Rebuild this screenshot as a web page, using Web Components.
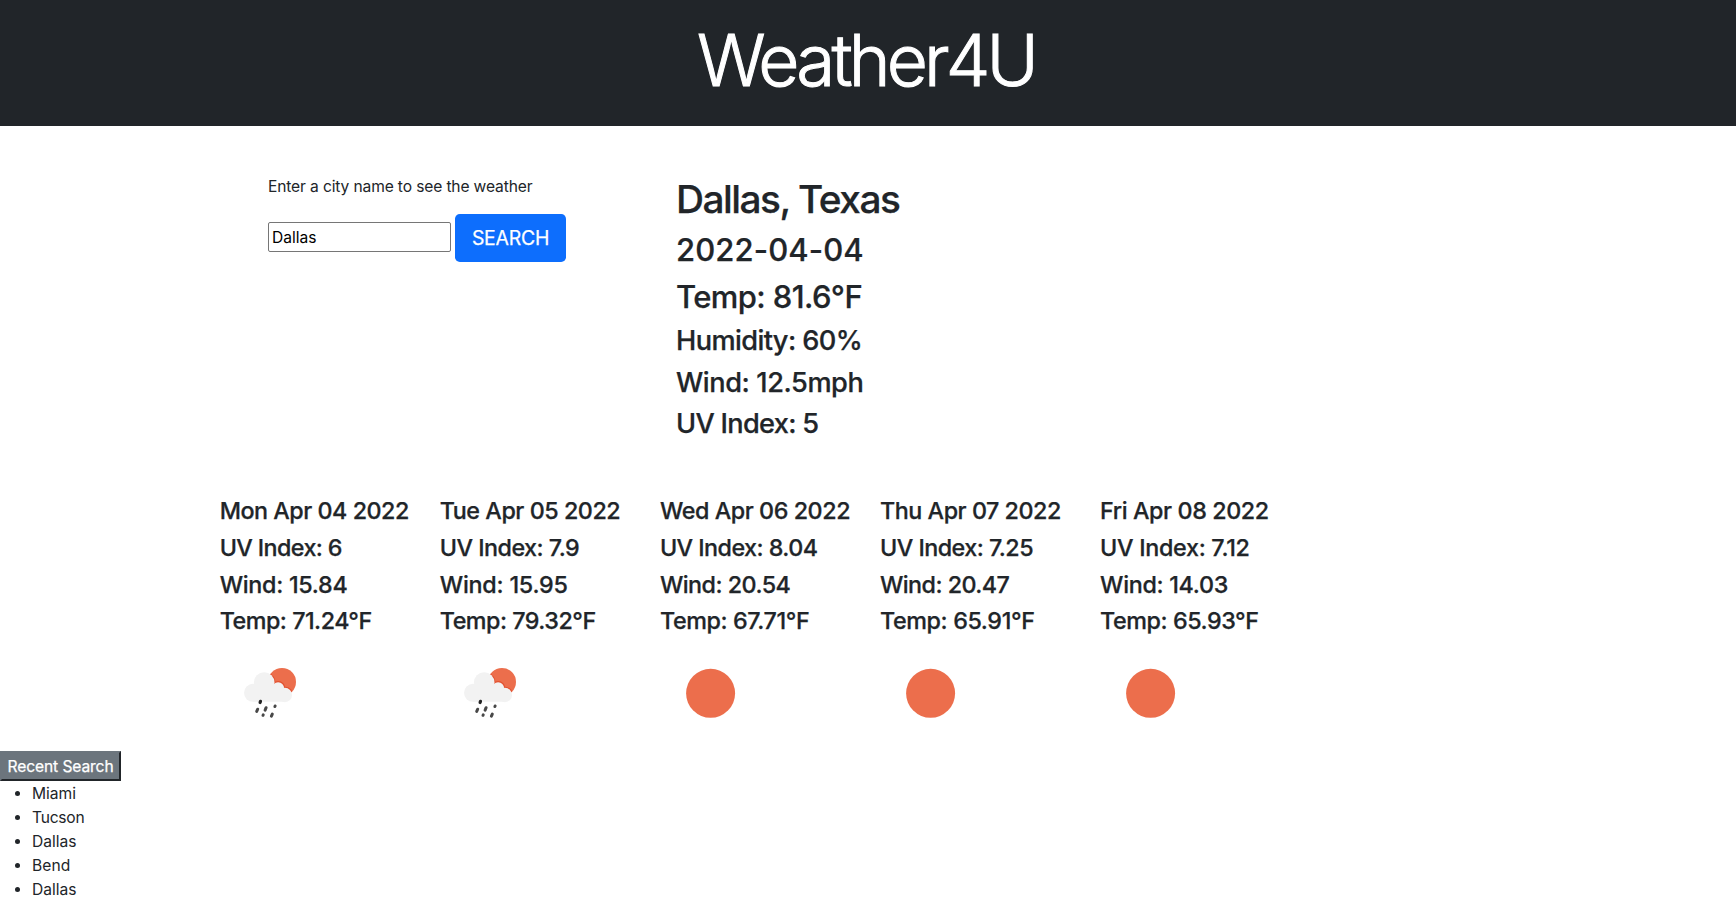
<!DOCTYPE html>
<html lang="en">
<head>
<meta charset="utf-8">
<title>Weather4U</title>
<style>
html,body{margin:0;background:#fff}
body{font:400 15.6px/24px Inter,"Liberation Sans",sans-serif;color:#212529;overflow:hidden}
</style>
</head>
<body>
<weather-app></weather-app>
<script>
const define = (name, html, init) => {
  const template = document.createElement('template');
  template.innerHTML = html;
  customElements.define(name, class extends HTMLElement {
    connectedCallback() {
      if (this.shadowRoot) return;
      const root = this.attachShadow({ mode: 'open' });
      root.append(template.content.cloneNode(true));
      if (init) init(this, root);
    }
  });
};

// One line of text; "track" is the letter-spacing in pixels.
define('text-line', `
<style>
:host{display:block;white-space:nowrap;letter-spacing:var(--track,0)}
:host([size]){font-weight:500;margin-bottom:8px;-webkit-text-stroke:.25px currentColor}
:host([size="h1"]){font-size:38.8px;line-height:48px}
:host([size="h2"]){font-size:31px;line-height:38.4px}
:host([size="h3"]){font-size:27.2px;line-height:33.6px}
:host([size="h4"]){font-size:23.3px;line-height:28.8px}
</style><slot></slot>`, el => {
  if (el.hasAttribute('track')) el.style.setProperty('--track', el.getAttribute('track') + 'px');
});

define('app-header', `
<style>
:host{display:block;box-sizing:border-box;height:126px;padding:16.6px 4px 0 0;background:#212529;color:#fff;text-align:center}
h1{margin:0;font-size:71px;line-height:86.4px;font-weight:300;letter-spacing:-3.85px;-webkit-text-stroke:1px currentColor}
</style><h1><slot></slot></h1>`);

define('city-search', `
<style>
:host{display:block}
form{display:flex;align-items:center;gap:4px;margin-top:15px}
input{box-sizing:border-box;width:183px;height:30px;margin:-2px 0 0;padding:1px 2px 1px 3px;border:1px solid #767676;border-radius:2px;background:#fff;color:#000;font:inherit}
button{box-sizing:border-box;width:111px;height:48px;margin:0;padding:0;border:0;border-radius:4.8px;background:#0d6efd;color:#fff;font:400 19.4px/30px Inter,sans-serif;letter-spacing:-.22px;-webkit-text-stroke:.25px currentColor}
</style>
<text-line track="-0.139">Enter a city name to see the weather</text-line>
<form><input type="text" value="Dallas" aria-label="City"><button type="button">SEARCH</button></form>`);

define('current-weather', `
<style>:host{display:block}</style>
<text-line size="h1" track="-1.516">Dallas, Texas</text-line>
<text-line size="h2" track="0.1">2022-04-04</text-line>
<text-line size="h2" track="-0.6">Temp: 81.6°F</text-line>
<text-line size="h3" track="-0.6">Humidity: 60%</text-line>
<text-line size="h3" track="-0.416">Wind: 12.5mph</text-line>
<text-line size="h3" track="-0.7">UV Index: 5</text-line>`);

define('weather-icon', `
<style>
:host{display:block;width:100px;height:100px;margin-top:-.8px}
svg{display:none;width:100px;height:100px}
:host([kind="sun"]) .sun,:host([kind="rain"]) .rain{display:block}
</style>
<svg class="sun" viewBox="0 0 100 100"><circle cx="50.6" cy="50.3" r="24.5" fill="#ec6e4c"/></svg>
<svg class="rain" viewBox="0 0 100 100">
<defs><clipPath id="disc"><circle cx="62" cy="38.9" r="14"/></clipPath></defs>
<circle cx="62" cy="38.9" r="14" fill="#ec6e4c"/>
<g clip-path="url(#disc)" fill="#e2512f"><circle cx="44.2" cy="39.6" r="11.2"/><circle cx="58.3" cy="44.8" r="6.9"/><circle cx="65.2" cy="51.8" r="8"/></g>
<g fill="#f2f2f2"><circle cx="33" cy="49.8" r="9"/><circle cx="44.2" cy="39.6" r="10.3"/><circle cx="58.1" cy="45.2" r="6"/><circle cx="64.9" cy="52" r="7.2"/><path d="M33 44h25l7 7v7.8H33Z"/></g>
<g stroke="#484848" stroke-linecap="round" stroke-width="3" fill="none">
<path stroke="#222" stroke-width="3.2" d="M40.5 58.3l-.4 1.2"/><path d="M37.7 66.2l-1 2.2M46.1 64.7l-1 2.4M55.1 63l-.2.5M43.2 71.9l-.2.4M52.3 71.1l-.9 2"/></g>
</svg>`);

define('day-forecast', `<style>:host{display:block}</style><slot></slot><weather-icon></weather-icon>`,
  (el, root) => root.querySelector('weather-icon').setAttribute('kind', el.getAttribute('icon')));

define('recent-searches', `
<style>
:host{display:block}
button{display:block;box-sizing:border-box;width:121px;height:30px;margin:0;padding:1px 0 0;border:2px solid;border-color:#6c757d #212529 #212529 #6c757d;background:#6c757d;color:#fff;font:inherit;line-height:25px;letter-spacing:-.094px;-webkit-text-stroke:.25px currentColor}
ul{margin:0;padding:1px 0 0 32px}
</style>
<button type="button">Recent Search</button>
<ul><li>Miami</li><li style="letter-spacing:-.24px">Tucson</li><li>Dallas</li><li style="letter-spacing:.1px">Bend</li><li>Dallas</li></ul>`);

define('weather-app', `
<style>
:host{display:block;height:917px}
.top{display:grid;grid-template-columns:408px 1fr;height:321.6px;padding:49.4px 0 0 268px}
.days{display:grid;grid-template-columns:repeat(5,220.1px);padding-left:219.7px;height:254px}
</style>
<app-header>Weather4U</app-header>
<div class="top"><city-search></city-search><current-weather></current-weather></div>
<div class="days">
<day-forecast icon="rain"><text-line size="h4" track="-0.48">Mon Apr 04 2022</text-line><text-line size="h4" track="-0.6">UV Index: 6</text-line><text-line size="h4" track="-0.28">Wind: 15.84</text-line><text-line size="h4" track="-0.5">Temp: 71.24°F</text-line></day-forecast>
<day-forecast icon="rain"><text-line size="h4" track="-0.46">Tue Apr 05 2022</text-line><text-line size="h4" track="-0.52">UV Index: 7.9</text-line><text-line size="h4" track="-0.22">Wind: 15.95</text-line><text-line size="h4" track="-0.5">Temp: 79.32°F</text-line></day-forecast>
<day-forecast icon="sun"><text-line size="h4" track="-0.43">Wed Apr 06 2022</text-line><text-line size="h4" track="-0.53">UV Index: 8.04</text-line><text-line size="h4" track="-0.52">Wind: 20.54</text-line><text-line size="h4" track="-0.38">Temp: 67.71°F</text-line></day-forecast>
<day-forecast icon="sun"><text-line size="h4" track="-0.46">Thu Apr 07 2022</text-line><text-line size="h4" track="-0.52">UV Index: 7.25</text-line><text-line size="h4" track="-0.54">Wind: 20.47</text-line><text-line size="h4" track="-0.38">Temp: 65.91°F</text-line></day-forecast>
<day-forecast icon="sun"><text-line size="h4" track="-0.4">Fri Apr 08 2022</text-line><text-line size="h4" track="-0.29">UV Index: 7.12</text-line><text-line size="h4" track="-0.3">Wind: 14.03</text-line><text-line size="h4" track="-0.43">Temp: 65.93°F</text-line></day-forecast>
</div>
<recent-searches></recent-searches>`);
</script>
</body>
</html>
